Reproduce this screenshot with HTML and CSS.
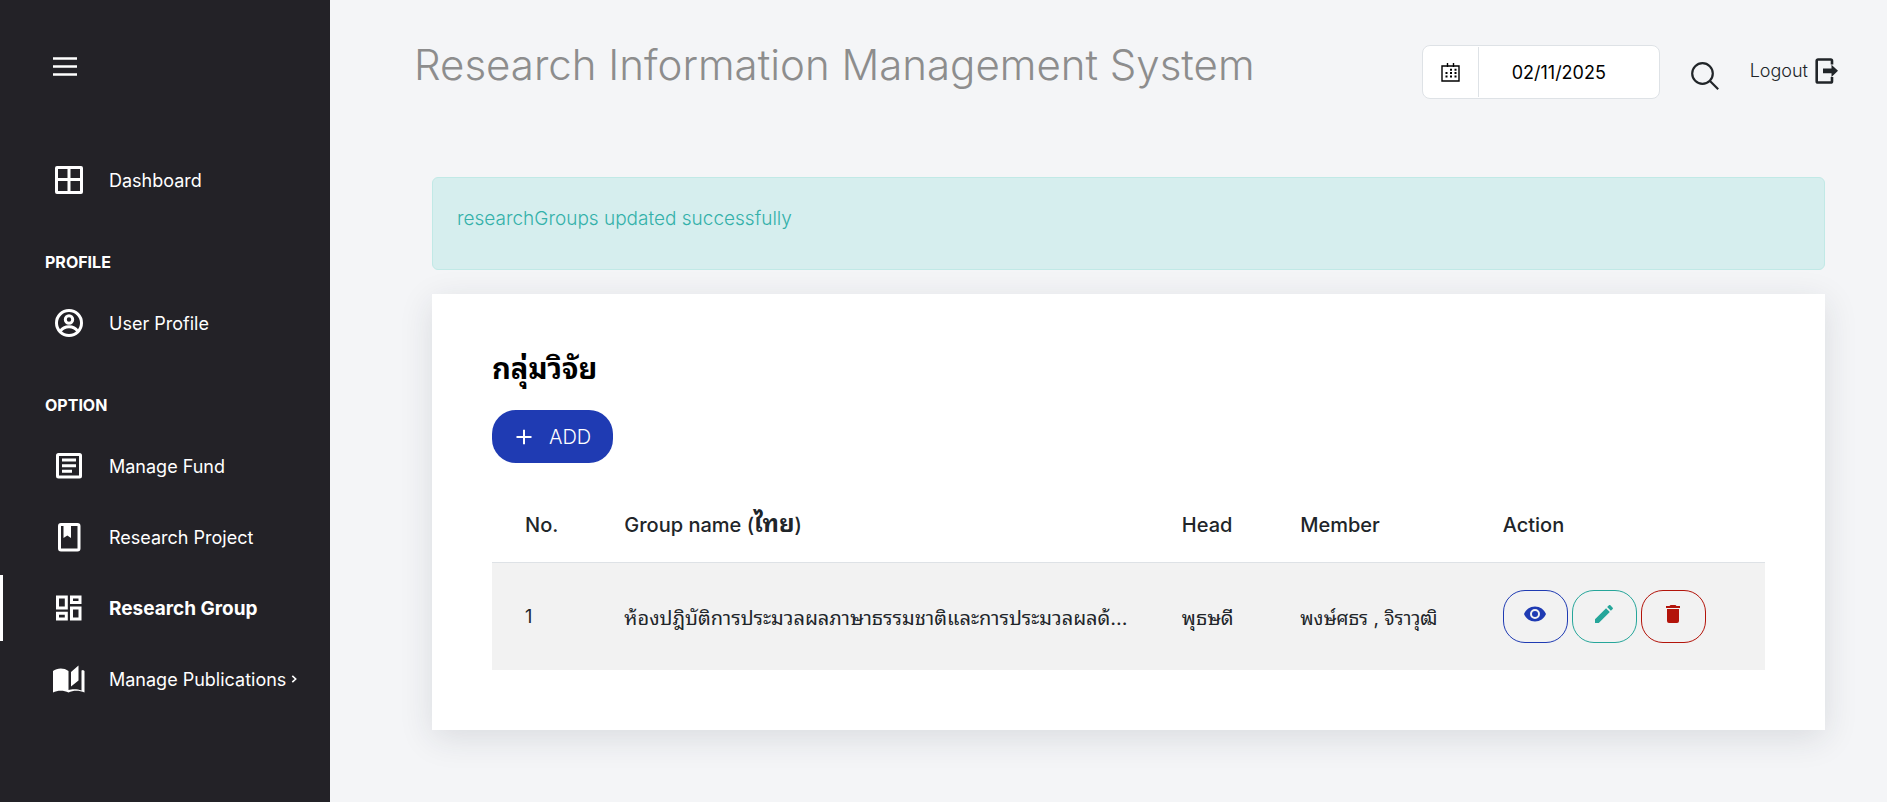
FILE: index.html
```html
<!DOCTYPE html>
<html lang="en">
<head>
<meta charset="utf-8">
<meta name="viewport" content="width=device-width, initial-scale=1">
<title>Research Information Management System</title>
<link rel="stylesheet" href="styles.css">
</head>
<body>
<div class="app">
  <aside class="sidebar">
    <button class="menu-toggle" type="button" aria-label="Toggle menu">
      <svg width="24" height="20" viewBox="0 0 24 20"><path d="M0 1.5h24M0 9.5h24M0 17.5h24" stroke="currentColor" stroke-width="2.4"/></svg>
    </button>
    <nav class="nav">
      <a class="nav-item" href="#">
        <svg class="nav-icon" viewBox="0 0 32 32"><path d="M4 2h24a2 2 0 0 1 2 2v24a2 2 0 0 1-2 2H4a2 2 0 0 1-2-2V4a2 2 0 0 1 2-2zm1 3v9h9.500V5zm12.500 0v9H27V5zM5 17v10h9.500V17zm12.500 0v10H27V17z" fill="currentColor" fill-rule="evenodd"/></svg>
        <span>Dashboard</span>
      </a>
      <h2 class="nav-heading">PROFILE</h2>
      <a class="nav-item" href="#">
        <svg class="nav-icon" viewBox="0 0 32 32" fill="none" stroke="currentColor" stroke-width="3"><circle cx="16" cy="16" r="12.500"/><circle cx="16" cy="12.500" r="3.700"/><path d="M7.500 24c2-3 5-4.200 8.500-4.200s6.500 1.200 8.500 4.200"/></svg>
        <span>User Profile</span>
      </a>
      <h2 class="nav-heading">OPTION</h2>
      <a class="nav-item" href="#">
        <svg class="nav-icon" viewBox="0 0 32 32" fill="none" stroke="currentColor" stroke-width="3"><rect x="4.500" y="4.500" width="23" height="22.500" rx="1"/><path d="M9 10h14M9 15.700h14M9 21.300h10"/></svg>
        <span>Manage Fund</span>
      </a>
      <a class="nav-item" href="#">
        <svg class="nav-icon" viewBox="0 0 32 32"><rect x="6.500" y="3.500" width="19.500" height="25.500" rx="1.500" fill="none" stroke="currentColor" stroke-width="3"/><path d="M10.500 3h7.500v14l-3.700-2.400-3.800 2.400z" fill="currentColor"/></svg>
        <span>Research Project</span>
      </a>
      <a class="nav-item active" href="#">
        <svg class="nav-icon" viewBox="0 0 32 32" fill="none" stroke="currentColor" stroke-width="3"><path d="M4.500 5h8.800v11H4.500zM18.500 5h8.500v5.500h-8.500zM18.500 16h8.500v11h-8.500zM4.500 21.300h8.800V27H4.500z"/></svg>
        <span>Research Group</span>
      </a>
      <a class="nav-item" href="#">
        <svg class="nav-icon" viewBox="0 0 32 32"><path d="M0 29.500V8c4-3.200 11-3.500 15.500 0v19c3-1.200 9.500-1.200 13 .5V7.500L30 7l1.500 1v21.500c-5-2.200-11.500-2.200-16 0-4.500-2.300-11-2.300-15.500 0zM18 9l7.500-6.500v15L18 23.500z" fill="currentColor"/></svg>
        <span>Manage Publications</span>
        <svg class="nav-caret" width="6" height="8" viewBox="0 0 6 8"><path d="M1.300.8 4.700 4 1.300 7.200" fill="none" stroke="currentColor" stroke-width="1.600"/></svg>
      </a>
    </nav>
  </aside>

  <div class="content">
    <header class="topbar">
      <h1 class="brand">Research Information Management System</h1>
      <div class="tools">
        <label class="date-box">
          <span class="date-icon">
            <svg width="19" height="19" viewBox="0 0 19 19"><path d="M1 3h17v15H1zM6.500 0v4M12.500 0v4" fill="none" stroke="currentColor" stroke-width="1.400"/><path d="M4.500 10h11M4.500 13.500h11" stroke="currentColor" stroke-width="2" stroke-dasharray="2 2.500"/><path d="M9 6.800h6.500" stroke="currentColor" stroke-width="2" stroke-dasharray="2 2.500"/></svg>
          </span>
          <input class="date-input" type="text" value="02/11/2025" aria-label="Date">
        </label>
        <button class="search" type="button" aria-label="Search">
          <svg width="28" height="28" viewBox="0 0 28 28" fill="none" stroke="currentColor" stroke-width="2.200"><circle cx="11.500" cy="11.500" r="10.300"/><path d="m19 19 8.200 8.200"/></svg>
        </button>
        <a class="logout" href="#">
          <span>Logout</span>
          <svg width="24" height="26" viewBox="0 0 24 26"><path d="M17 6.500V2.800a1.300 1.300 0 0 0-1.300-1.300H3a1.300 1.300 0 0 0-1.300 1.300v20.400A1.300 1.300 0 0 0 3 24.500h12.700a1.300 1.300 0 0 0 1.300-1.300V19" fill="none" stroke="currentColor" stroke-width="2.600"/><path d="M8 10.500h8.500V6.700l6.500 6.100-6.500 6.200v-3.800H8z" fill="currentColor"/></svg>
        </a>
      </div>
    </header>

    <main class="main">
      <div class="alert" role="status"><p>researchGroups updated successfully</p></div>
      <section class="card">
        <h2 class="card-title" lang="th">กลุ่มวิจัย</h2>
        <button class="add" type="button">
          <svg width="16" height="16" viewBox="0 0 16 16"><path d="M8 .8v14.400M.5 8h15" stroke="currentColor" stroke-width="2"/></svg>
          <span>ADD</span>
        </button>
        <table class="table">
          <colgroup><col class="c-no"><col class="c-name"><col class="c-head"><col class="c-member"><col class="c-action"></colgroup>
          <thead>
            <tr><th>No.</th><th>Group name (<span class="thai" lang="th">ไทย</span>)</th><th>Head</th><th>Member</th><th>Action</th></tr>
          </thead>
          <tbody>
            <tr>
              <td class="number">1</td>
              <td lang="th">ห้องปฎิบัติการประมวลผลภาษาธรรมชาติและการประมวลผลด้...</td>
              <td lang="th">พุธษดี</td>
              <td class="members" lang="th">พงษ์ศธร , จิราวุฒิ</td>
              <td>
                <div class="actions">
                  <button class="act view" type="button" aria-label="View"><svg viewBox="1 1 22 22"><path fill="currentColor" d="M12 9a3 3 0 0 0-3 3 3 3 0 0 0 3 3 3 3 0 0 0 3-3 3 3 0 0 0-3-3m0 8a5 5 0 0 1-5-5 5 5 0 0 1 5-5 5 5 0 0 1 5 5 5 5 0 0 1-5 5m0-12.500C7 4.500 2.730 7.610 1 12c1.730 4.390 6 7.500 11 7.500s9.270-3.110 11-7.500c-1.730-4.390-6-7.500-11-7.500z"/></svg></button>
                  <button class="act edit" type="button" aria-label="Edit"><svg viewBox="1 1 22 22"><path fill="currentColor" d="M20.710 7.040c.39-.39.39-1.040 0-1.410l-2.340-2.340c-.37-.39-1.020-.39-1.410 0l-1.840 1.830 3.750 3.750M3 17.250V21h3.750L17.810 9.930l-3.750-3.750L3 17.250z"/></svg></button>
                  <button class="act delete" type="button" aria-label="Delete"><svg viewBox="1 1 22 22"><path fill="currentColor" d="M19 4h-3.500l-1-1h-5l-1 1H5v2h14M6 19a2 2 0 0 0 2 2h8a2 2 0 0 0 2-2V7H6v12z"/></svg></button>
                </div>
              </td>
            </tr>
          </tbody>
        </table>
      </section>
    </main>
  </div>
</div>
</body>
</html>
```
FILE: styles.css
```css
* {
  box-sizing: border-box;
}

body {
  margin: 0;
  background: #f4f5f7;
  color: #212529;
  font-family: Inter, "Noto Sans Thai Looped", Loma, "Noto Sans Thai", "Noto Sans", sans-serif;
  font-size: 18px;
}

h1, h2, p {
  margin: 0;
}

button, input {
  font: inherit;
  color: inherit;
}

button {
  border: 0;
  padding: 0;
  background: none;
  cursor: pointer;
}

a {
  color: inherit;
  text-decoration: none;
}

svg {
  display: block;
}

.app {
  display: flex;
  min-height: 100vh;
}

/* Sidebar */
.sidebar {
  flex: none;
  width: 330px;
  background: #232227;
  color: #fff;
}

.menu-toggle {
  margin: 57px 0 0 53px;
}

.nav {
  display: flex;
  flex-direction: column;
  gap: 5px;
  padding-top: 66px;
}

.nav-item {
  display: flex;
  align-items: center;
  height: 66px;
  padding-left: 53px;
  border-left: 0 solid #fff;
  font-size: 18px;
  white-space: nowrap;
}

.nav-item.active {
  padding-left: 50px;
  border-left-width: 3px;
  font-size: 19px;
  font-weight: 700;
}

.nav-icon {
  width: 32px;
  height: 32px;
  margin-right: 24px;
}

.nav-caret {
  margin-left: 5px;
}

.nav-heading {
  height: 67px;
  padding: 34px 0 0 45px;
  font-size: 16px;
  line-height: 20px;
  font-weight: 700;
}

/* Header */
.content {
  flex: 1;
  min-width: 0;
}

.topbar {
  display: flex;
  align-items: flex-start;
  justify-content: space-between;
  padding: 36px 48px 0 84px;
}

.brand {
  color: #8d8d8d;
  font-size: 42px;
  line-height: 58px;
  font-weight: 300;
}

.tools {
  display: flex;
  align-items: center;
  gap: 31px;
  padding-top: 9px;
}

.date-box {
  display: flex;
  width: 238px;
  height: 54px;
  border: 1px solid #dee2e6;
  border-radius: 8px;
  background: #fff;
  color: #000;
}

.date-icon {
  display: flex;
  align-items: center;
  justify-content: center;
  width: 56px;
  margin: 1px 0;
  border-right: 1px solid #dee2e6;
}

.date-input {
  flex: 1;
  min-width: 0;
  padding: 0 33px;
  border: 0;
  background: none;
  font-size: 18px;
}

.search {
  padding-top: 8px;
}

.logout {
  display: flex;
  align-items: center;
  gap: 7px;
  padding-bottom: 3px;
  font-size: 18px;
  font-weight: 300;
}

/* Main */
.main {
  padding: 78px 62px 48px 102px;
}

.alert {
  padding: 29px 24px 38px;
  border: 1px solid #c1e9e6;
  border-radius: 6px;
  background: #d6eeee;
  color: #34b1aa;
  font-size: 19px;
  line-height: 24px;
  font-weight: 300;
}

.card {
  margin-top: 24px;
  padding: 58px 60px 60px;
  background: #fff;
  box-shadow: 0 8px 32px rgba(31, 45, 61, 0.12);
}

.card-title {
  color: #000;
  font-size: 29px;
  line-height: 34px;
  font-weight: 700;
}

.add {
  display: flex;
  align-items: center;
  gap: 17px;
  height: 53px;
  margin-top: 24px;
  padding: 0 22px 0 24px;
  border-radius: 24px;
  background: #1f3bb3;
  color: #fff;
  font-size: 20px;
  font-weight: 300;
}

.table {
  width: 100%;
  margin-top: 25px;
  border-collapse: collapse;
  table-layout: fixed;
}

.c-no { width: 7.8%; }
.c-name { width: 43.8%; }
.c-head { width: 9.3%; }
.c-member { width: 15.9%; }
.c-action { width: 23.2%; }

.table th {
  height: 74px;
  padding: 0 33px;
  border-bottom: 1px solid #dee2e6;
  font-size: 20px;
  line-height: 24px;
  font-weight: 500;
  text-align: left;
  white-space: nowrap;
}

.thai {
  font-size: 24px;
  font-weight: 700;
}

.table td {
  height: 108px;
  padding: 0 33px;
  background: #f2f2f2;
  font-size: 20px;
  white-space: nowrap;
}

.table .number {
  font-size: 18px;
}

.table .members {
  font-size: 19px;
}

.actions {
  display: flex;
  gap: 4px;
}

.act {
  display: flex;
  align-items: center;
  justify-content: center;
  width: 65px;
  height: 53px;
  padding-bottom: 4px;
  border: 1px solid currentColor;
  border-radius: 22px;
}

.act svg {
  width: 22px;
  height: 22px;
}

.view { color: #1f3bb3; }
.edit { color: #26a69a; }
.delete { color: #b3140a; }
```
